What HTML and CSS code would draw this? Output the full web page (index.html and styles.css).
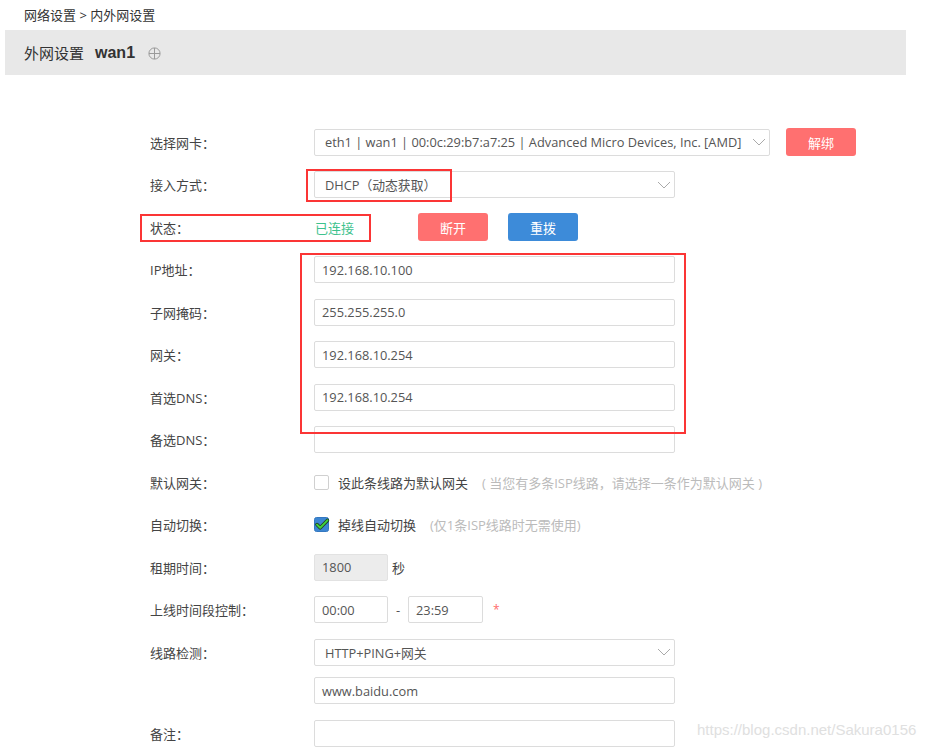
FILE: index.html
```html
<!DOCTYPE html>
<html lang="zh-CN">
<head>
<meta charset="utf-8">
<title>内外网设置</title>
<link rel="stylesheet" href="styles.css">
</head>
<body>
<div class="page">
  <div class="crumb">网络设置 &gt; 内外网设置</div>
  <div class="titlebar">
    <span class="t1">外网设置</span>
    <span class="t2">wan1</span>
    <svg class="plus" width="13" height="13" viewBox="0 0 13 13"><circle cx="6.5" cy="6.5" r="5.6" fill="none" stroke="#9a9a9a" stroke-width="1"/><path d="M6.5 1v11M1 6.5h11" stroke="#9a9a9a" stroke-width="1"/></svg>
  </div>

  <div class="form">
    <div class="row">
      <div class="label">选择网卡：</div>
      <div class="select w456"><span>eth1 | wan1 | 00:0c:29:b7:a7:25 | Advanced Micro Devices, Inc. [AMD]</span>
        <svg class="chev" width="14" height="8" viewBox="0 0 14 8"><path d="M1 1l6 6 6-6" fill="none" stroke="#aaa" stroke-width="1"/></svg></div>
      <button class="btn red unbind">解绑</button>
    </div>
    <div class="row">
      <div class="label">接入方式：</div>
      <div class="select w361"><span>DHCP（动态获取）</span>
        <svg class="chev" width="14" height="8" viewBox="0 0 14 8"><path d="M1 1l6 6 6-6" fill="none" stroke="#aaa" stroke-width="1"/></svg></div>
    </div>
    <div class="row">
      <div class="label">状态：</div>
      <div class="status">已连接</div>
      <button class="btn red">断开</button>
      <button class="btn blue redial">重拨</button>
    </div>
    <div class="row">
      <div class="label">IP地址：</div>
      <div class="input w361">192.168.10.100</div>
    </div>
    <div class="row">
      <div class="label">子网掩码：</div>
      <div class="input w361">255.255.255.0</div>
    </div>
    <div class="row">
      <div class="label">网关：</div>
      <div class="input w361">192.168.10.254</div>
    </div>
    <div class="row">
      <div class="label">首选DNS：</div>
      <div class="input w361">192.168.10.254</div>
    </div>
    <div class="row">
      <div class="label">备选DNS：</div>
      <div class="input w361"></div>
    </div>
    <div class="row">
      <div class="label">默认网关：</div>
      <span class="cb"></span>
      <span class="cbtext">设此条线路为默认网关</span>
      <span class="hint">( 当您有多条ISP线路，请选择一条作为默认网关 )</span>
    </div>
    <div class="row">
      <div class="label">自动切换：</div>
      <svg class="cbon" width="16" height="15" viewBox="0 0 16 15"><rect x="0.5" y="0.5" width="14" height="14" rx="2" fill="#3c86d2" stroke="#3478c0"/><path d="M3 7.6l3.2 3.2L13.4 3.4" fill="none" stroke="#1f3d22" stroke-width="3.6" stroke-linecap="round" stroke-linejoin="round"/><path d="M3 7.6l3.2 3.2L13.4 3.4" fill="none" stroke="#3fd23a" stroke-width="2" stroke-linecap="round" stroke-linejoin="round"/></svg>
      <span class="cbtext">掉线自动切换</span>
      <span class="hint">(仅1条ISP线路时无需使用)</span>
    </div>
    <div class="row">
      <div class="label">租期时间：</div>
      <div class="input w74 disabled">1800</div>
      <span class="unit">秒</span>
    </div>
    <div class="row">
      <div class="label">上线时间段控制：</div>
      <div class="input w74">00:00</div>
      <span class="dash">-</span>
      <div class="input w75">23:59</div>
      <span class="star">*</span>
    </div>
    <div class="row">
      <div class="label">线路检测：</div>
      <div class="select w361"><span>HTTP+PING+网关</span>
        <svg class="chev" width="14" height="8" viewBox="0 0 14 8"><path d="M1 1l6 6 6-6" fill="none" stroke="#aaa" stroke-width="1"/></svg></div>
    </div>
    <div class="row sub">
      <div class="label"></div>
      <div class="input w361">www.baidu.com</div>
    </div>
    <div class="row">
      <div class="label">备注：</div>
      <div class="input w361"></div>
    </div>
  </div>

  <div class="mark m1"></div>
  <div class="mark m2"></div>
  <div class="mark m3"></div>
  <div class="watermark">https://blog.csdn.net/Sakura0156</div>
</div>
</body>
</html>
```

FILE: styles.css
```css
html, body {
  margin: 0;
  padding: 0;
  background: #fff;
}
body {
  font-family: "Open Sans", "Noto Sans CJK SC", sans-serif;
  font-size: 13px;
  color: #444;
  width: 937px;
  height: 748px;
  overflow: hidden;
}
.page {
  position: relative;
  width: 937px;
  height: 748px;
}
.crumb {
  height: 30px;
  line-height: 30px;
  padding-left: 24px;
  font-size: 13px;
  color: #333;
}
.titlebar {
  margin-left: 5px;
  width: 901px;
  height: 45px;
  background: #e8e8e8;
  display: flex;
  align-items: center;
  padding-left: 19px;
  box-sizing: border-box;
  color: #333;
}
.t1 {
  font-size: 15px;
}
.t2 {
  margin-left: 11px;
  font-family: "Liberation Sans", Arial, sans-serif;
  font-weight: bold;
  font-size: 16px;
}
.plus {
  margin-left: 13px;
  margin-top: 1px;
}
.form {
  margin-top: 45.75px;
  padding-left: 150px;
}
.row {
  display: flex;
  align-items: center;
  height: 42.5px;
}
.row.sub {
  height: 38.5px;
  align-items: flex-start;
  padding-top: 4px;
  box-sizing: border-box;
}
.label {
  width: 164px;
  flex: none;
  color: #444;
}
.select, .input {
  box-sizing: border-box;
  height: 27px;
  border: 1px solid #dcdcdc;
  border-radius: 2px;
  background: #fff;
  color: #555;
  font-size: 12.8px;
  padding-left: 7px;
  display: flex;
  align-items: center;
  flex: none;
  white-space: nowrap;
}
.select {
  justify-content: space-between;
  padding-right: 3px;
  padding-left: 10px;
}
.chev {
  flex: none;
}
.w456 { width: 456px; }
.w361 { width: 361px; }
.w74 { width: 74px; }
.w75 { width: 75px; }
.input.disabled {
  background: #ececec;
  border-color: #e2e2e2;
}
.btn {
  box-sizing: border-box;
  width: 70px;
  height: 28px;
  border: none;
  border-radius: 3px;
  color: #fff;
  font-family: "Open Sans", "Noto Sans CJK SC", sans-serif;
  font-size: 13px;
  padding: 0;
  flex: none;
}
.btn.red { background: #ff7070; }
.btn.blue { background: #3d8bd9; }
.unbind { margin-left: 16px; }
.redial { margin-left: 20px; }
.status {
  width: 104px;
  flex: none;
  color: #3ec28e;
  padding-left: 1px;
  box-sizing: border-box;
}
.cb {
  box-sizing: border-box;
  width: 15px;
  height: 15px;
  border: 1px solid #d0d0d0;
  border-radius: 2px;
  background: #fff;
  flex: none;
}
.cbon {
  flex: none;
  margin-right: -1px;
}
.cbtext {
  margin-left: 9px;
  color: #444;
}
.hint {
  color: #bbb;
  margin-left: 14px;
  white-space: pre;
}
.unit {
  margin-left: 4px;
  color: #444;
}
.dash {
  width: 20px;
  text-align: center;
  color: #555;
}
.star {
  margin-left: 10px;
  color: #ff6b6b;
  font-size: 12px;
}
.mark {
  position: absolute;
  box-sizing: border-box;
  border: 2px solid #fb3535;
}
.m1 { left: 306px; top: 169px; width: 146px; height: 33px; }
.m2 { left: 140px; top: 214px; width: 231px; height: 28px; }
.m3 { left: 300px; top: 253px; width: 386px; height: 181px; border-width: 2.5px; }
.watermark {
  position: absolute;
  left: 697px;
  top: 721px;
  font-family: "Liberation Sans", Arial, sans-serif;
  font-size: 15px;
  color: #e0e0e0;
  white-space: nowrap;
}
```
